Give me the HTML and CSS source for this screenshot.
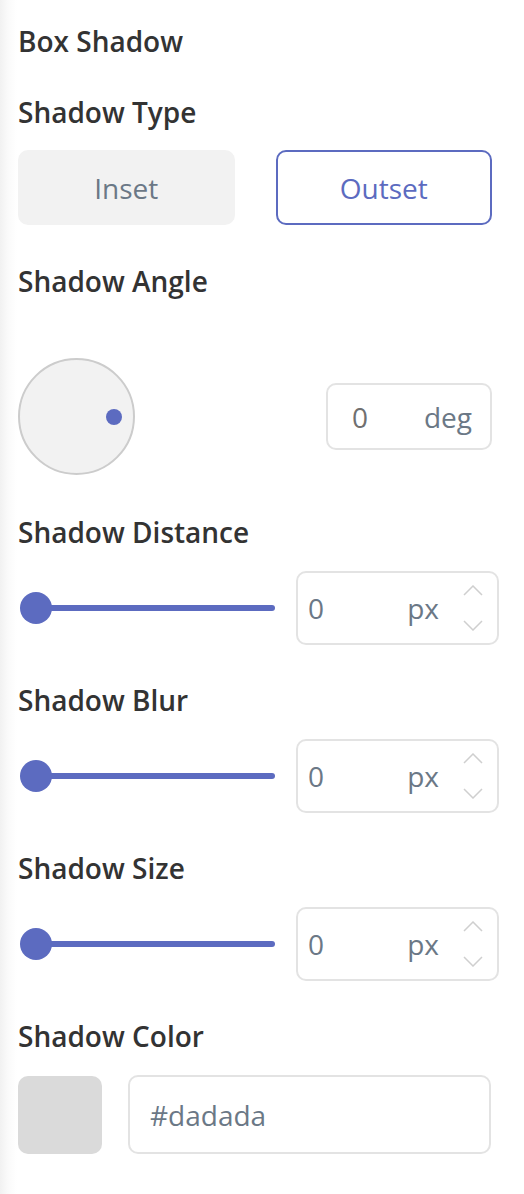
FILE: index.html
```html
<!DOCTYPE html>
<html>
<head>
<meta charset="utf-8">
<link rel="stylesheet" href="styles.css">
</head>
<body>
<div class="panel">
  <div class="label title">Box Shadow</div>

  <section class="sec sec-type">
    <div class="label">Shadow Type</div>
    <div class="toggle">
      <button class="tbtn">Inset</button>
      <button class="tbtn active">Outset</button>
    </div>
  </section>

  <section class="sec sec-angle">
    <div class="label">Shadow Angle</div>
    <div class="angle-row">
      <div class="dial"><span class="dial-dot"></span></div>
      <div class="box deg-box">
        <span class="deg-val">0</span>
        <span class="unit">deg</span>
      </div>
    </div>
  </section>

  <section class="sec sec-slider first">
    <div class="label">Shadow Distance</div>
    <div class="slider-row">
      <div class="slider"><span class="thumb"></span><span class="track"></span></div>
      <div class="box num-box">
        <span class="val">0</span>
        <span class="unit">px</span>
        <svg class="spin" width="20" height="46" viewBox="0 0 20 46"><polyline points="1,10 10,1 19,10"/><polyline points="1,36 10,45 19,36"/></svg>
      </div>
    </div>
  </section>

  <section class="sec sec-slider">
    <div class="label">Shadow Blur</div>
    <div class="slider-row">
      <div class="slider"><span class="thumb"></span><span class="track"></span></div>
      <div class="box num-box">
        <span class="val">0</span>
        <span class="unit">px</span>
        <svg class="spin" width="20" height="46" viewBox="0 0 20 46"><polyline points="1,10 10,1 19,10"/><polyline points="1,36 10,45 19,36"/></svg>
      </div>
    </div>
  </section>

  <section class="sec sec-slider">
    <div class="label">Shadow Size</div>
    <div class="slider-row">
      <div class="slider"><span class="thumb"></span><span class="track"></span></div>
      <div class="box num-box">
        <span class="val">0</span>
        <span class="unit">px</span>
        <svg class="spin" width="20" height="46" viewBox="0 0 20 46"><polyline points="1,10 10,1 19,10"/><polyline points="1,36 10,45 19,36"/></svg>
      </div>
    </div>
  </section>

  <section class="sec sec-slider">
    <div class="label">Shadow Color</div>
    <div class="color-row">
      <div class="swatch"></div>
      <div class="box color-box">#dadada</div>
    </div>
  </section>
</div>
</body>
</html>
```

FILE: styles.css
```css
html, body {
  margin: 0;
  padding: 0;
}

body {
  width: 524px;
  height: 1194px;
  background: linear-gradient(to right, #f1f1f1 0px, #fafafa 8px, #ffffff 17px);
  font-family: "Open Sans", "Noto Sans", sans-serif;
  color: #333333;
  overflow: hidden;
}

.panel {
  display: flex;
  flex-direction: column;
  padding: 22px 32px 0 18px;
}

.label {
  font-size: 28px;
  font-weight: 600;
  line-height: 38px;
  color: #333333;
  white-space: nowrap;
}

.sec {
  display: flex;
  flex-direction: column;
}

.sec-type {
  margin-top: 33px;
}

.sec-type .label {
  margin-bottom: 19px;
}

.toggle {
  display: grid;
  grid-template-columns: 1fr 1fr;
  column-gap: 41px;
}

.tbtn {
  height: 75px;
  border: 2px solid #f2f2f2;
  border-radius: 10px;
  background: #f2f2f2;
  font-family: "Open Sans", "Noto Sans", sans-serif;
  font-size: 28px;
  color: #6b7886;
  padding: 0;
}

.tbtn.active {
  background: #ffffff;
  border-color: #5c6bc0;
  color: #5c6bc0;
}

.sec-angle {
  margin-top: 37px;
}

.angle-row {
  display: flex;
  justify-content: space-between;
  align-items: center;
  margin-top: 58px;
}

.dial {
  box-sizing: border-box;
  width: 117px;
  height: 117px;
  border: 2px solid #cccccc;
  border-radius: 50%;
  background: #f2f2f2;
  display: flex;
  align-items: center;
  justify-content: flex-end;
  padding-right: 11px;
}

.dial-dot {
  width: 16px;
  height: 16px;
  border-radius: 50%;
  background: #5c6bc0;
}

.box {
  box-sizing: border-box;
  border: 2px solid #e3e3e3;
  border-radius: 10px;
  background: #ffffff;
  display: flex;
  align-items: center;
  font-size: 28px;
  color: #6b7886;
}

.deg-box {
  width: 166px;
  height: 67px;
  padding: 0 18px 0 24px;
}

.deg-val {
  flex: 1;
  color: #707070;
}

.sec-slider {
  margin-top: 36px;
}

.sec-slider.first {
  margin-top: 38px;
}

.sec-slider .label {
  margin-bottom: 20px;
}

.slider-row {
  display: grid;
  grid-template-columns: 257px 203px;
  column-gap: 21px;
  align-items: center;
}

.slider {
  display: flex;
  align-items: center;
  padding-left: 2px;
}

.thumb {
  flex: none;
  width: 32px;
  height: 32px;
  border-radius: 50%;
  background: #5c6bc0;
  position: relative;
  z-index: 1;
}

.track {
  flex: 1;
  height: 6px;
  margin-left: -6px;
  border-radius: 3px;
  background: #5c6bc0;
}

.num-box {
  height: 74px;
  padding: 0 14px 0 10px;
}

.val {
  flex: 1;
}

.unit {
  color: #6b7886;
}

.spin {
  margin-left: 24px;
  fill: none;
  stroke: #cfcfcf;
  stroke-width: 1.5;
}

.color-row {
  display: flex;
  align-items: center;
  gap: 26px;
}

.swatch {
  width: 84px;
  height: 78px;
  border-radius: 10px;
  background: #dadada;
}

.color-box {
  width: 363px;
  height: 79px;
  padding: 0 20px;
}
```
